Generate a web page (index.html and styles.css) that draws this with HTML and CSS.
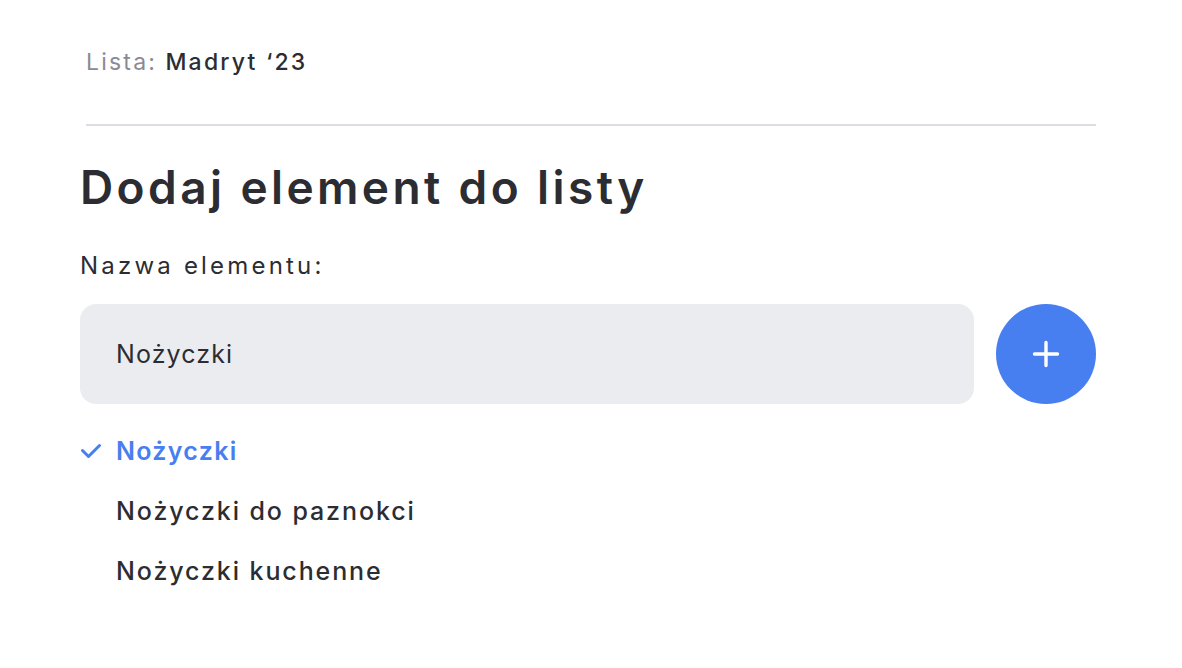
FILE: index.html
```html
<!DOCTYPE html>
<html lang="pl">
<head>
<meta charset="utf-8">
<link rel="stylesheet" href="styles.css">
</head>
<body>
<main class="page">
  <header class="list-header">
    <p class="list-name"><span class="list-label">Lista:</span> Madryt ‘23</p>
  </header>
  <h1 class="title">Dodaj element do listy</h1>
  <label class="field-label" for="item">Nazwa elementu:</label>
  <div class="input-row">
    <div class="input" id="item">Nożyczki</div>
    <button class="add-btn" aria-label="Dodaj">
      <svg width="28" height="28" viewBox="0 0 28 28"><path d="M14 2.5v23M2.5 14h23" stroke="#fff" stroke-width="3.4" stroke-linecap="round" fill="none"/></svg>
    </button>
  </div>
  <ul class="suggestions">
    <li class="item selected">
      <svg class="check" width="22" height="16" viewBox="0 0 22 16"><path d="M2.5 7.5l6 6L19.5 2.5" stroke="#477ef0" stroke-width="3" stroke-linecap="round" stroke-linejoin="round" fill="none"/></svg>
      <span>Nożyczki</span>
    </li>
    <li class="item"><span>Nożyczki do paznokci</span></li>
    <li class="item"><span>Nożyczki kuchenne</span></li>
  </ul>
</main>
</body>
</html>
```
FILE: styles.css
```css
* { box-sizing: border-box; }
html, body { margin: 0; background: #fff; }
body {
  font-family: Inter, "Noto Sans", sans-serif;
  color: #2c2d32;
}
.page {
  width: 1016px;
  margin-left: 80px;
  padding-top: 44px;
}
.list-header {
  margin-left: 6px;
  border-bottom: 2px solid #dcdce5;
  padding-bottom: 44px;
}
.list-name {
  margin: 0;
  font-size: 23px;
  line-height: 36px;
  font-weight: 500;
  letter-spacing: 2.2px;
  color: #2c2d32;
}
.list-label {
  font-weight: 400;
  color: #8a8a94;
}
.title {
  margin: 33px 0 0;
  font-size: 46px;
  line-height: 56px;
  font-weight: 600;
  letter-spacing: 3.4px;
  color: #2c2d32;
}
.field-label {
  display: block;
  margin-top: 36px;
  font-size: 24px;
  line-height: 30px;
  font-weight: 400;
  letter-spacing: 3.2px;
}
.input-row {
  display: flex;
  align-items: center;
  gap: 22px;
  margin-top: 23px;
}
.input {
  flex: 1;
  height: 100px;
  border-radius: 16px;
  background: #ebecf0;
  display: flex;
  align-items: center;
  padding-left: 36px;
  font-size: 25px;
  letter-spacing: 1.1px;
  color: #2c2d32;
}
.add-btn {
  width: 100px;
  height: 100px;
  border-radius: 50%;
  border: none;
  background: #477ef0;
  display: flex;
  align-items: center;
  justify-content: center;
  padding: 0;
}
.suggestions {
  list-style: none;
  margin: 17px 0 0;
  padding: 0;
}
.item {
  display: flex;
  align-items: center;
  height: 60px;
  padding-left: 36px;
  position: relative;
  font-size: 25px;
  font-weight: 500;
  letter-spacing: 1.9px;
  color: #2c2d32;
}
.item.selected {
  color: #477ef0;
  font-weight: 600;
  letter-spacing: 1.3px;
}
.check {
  position: absolute;
  left: 0;
  top: 22px;
}
```
